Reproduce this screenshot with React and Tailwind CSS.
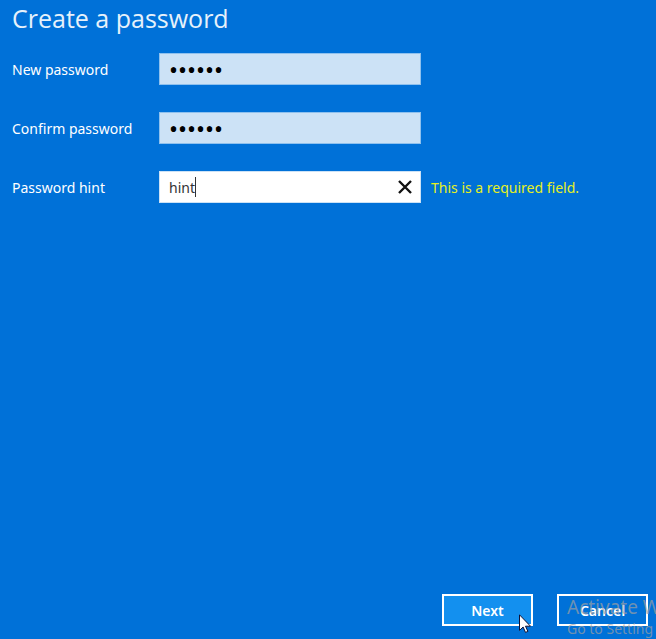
import React, { useState } from 'react';

function Field({ id, label, error, children }) {
  return (
    <div className="grid grid-cols-[147px_minmax(0,262px)_1fr] items-center">
      <label htmlFor={id} className="pt-[2px] text-[14px] leading-5">{label}</label>
      <div className="relative">{children}</div>
      {error && <p className="pl-[10px] pt-[2px] text-[14px] leading-5 text-[#e6f01e]">{error}</p>}
    </div>
  );
}

export default function App() {
  const [password, setPassword] = useState('secret');
  const [confirm, setConfirm] = useState('secret');
  const [hint, setHint] = useState('hint');

  return (
    <div className="relative min-h-screen overflow-hidden bg-[#0071d8] font-['Noto_Sans',sans-serif] text-white">
      <form className="flex min-h-screen flex-col pb-[13px] pl-3 pr-2" onSubmit={(e) => e.preventDefault()}>
        <h1 className="mb-[17px] font-['Open_Sans',sans-serif] text-[25px] leading-9 text-[#e6f1fb]">Create a password</h1>

        <div className="flex flex-col gap-[27px]">
          <Field id="password" label="New password">
            <input
              id="password"
              type="password"
              value={password}
              onChange={(e) => setPassword(e.target.value)}
              className="block h-8 w-full border border-[#8fc1ee] bg-[#cce2f6] px-[9px] pt-[2px] text-[24px] text-black outline-none"
            />
          </Field>

          <Field id="confirm" label="Confirm password">
            <input
              id="confirm"
              type="password"
              value={confirm}
              onChange={(e) => setConfirm(e.target.value)}
              className="block h-8 w-full border border-[#8fc1ee] bg-[#cce2f6] px-[9px] pt-[2px] text-[24px] text-black outline-none"
            />
          </Field>

          <Field id="hint" label="Password hint" error="This is a required field.">
            <input
              id="hint"
              type="text"
              value={hint}
              onChange={(e) => setHint(e.target.value)}
              className="block h-8 w-full border border-[#cce2f6] bg-white pl-[9px] pr-8 text-[14px] text-[#333333] caret-transparent outline-none"
            />
            {/* text cursor */}
            <span className="absolute left-9 top-[6px] h-5 w-px bg-[#333333]" />
            <button
              type="button"
              aria-label="Clear"
              onClick={() => setHint('')}
              className="absolute inset-y-0 right-0 flex w-8 items-center justify-center"
            >
              <svg viewBox="0 0 14 14" className="h-[14px] w-[14px]" fill="none" stroke="#111111" strokeWidth="2.4">
                <path d="M1 1l12 12M13 1L1 13" />
              </svg>
            </button>
          </Field>
        </div>

        <div className="mt-auto flex justify-end gap-6">
          <button type="submit" className="h-8 w-[91px] border-2 border-white bg-[#1390ef] pt-[2px] text-[14px] font-semibold leading-5">
            Next
          </button>
          <button type="button" className="h-8 w-[91px] border-2 border-white pt-[2px] text-[14px] font-semibold leading-5">
            Cancel
          </button>
        </div>
      </form>

      {/* activation watermark */}
      <div className="pointer-events-none absolute bottom-0 left-[567px] whitespace-nowrap text-[#a0a0a0]/70">
        <p className="text-[19px] leading-6">Activate W</p>
        <p className="text-[14px] leading-5">Go to Setting</p>
      </div>

      {/* mouse pointer */}
      <svg viewBox="0 0 12 19" className="pointer-events-none absolute left-[519px] top-[614px] h-[19px] w-3">
        <path d="M.5.8v15.6l3.6-3.4 2.4 5.4 2.4-1-2.4-5.2h5z" fill="#ffffff" stroke="#111133" strokeWidth="1" />
      </svg>
    </div>
  );
}
